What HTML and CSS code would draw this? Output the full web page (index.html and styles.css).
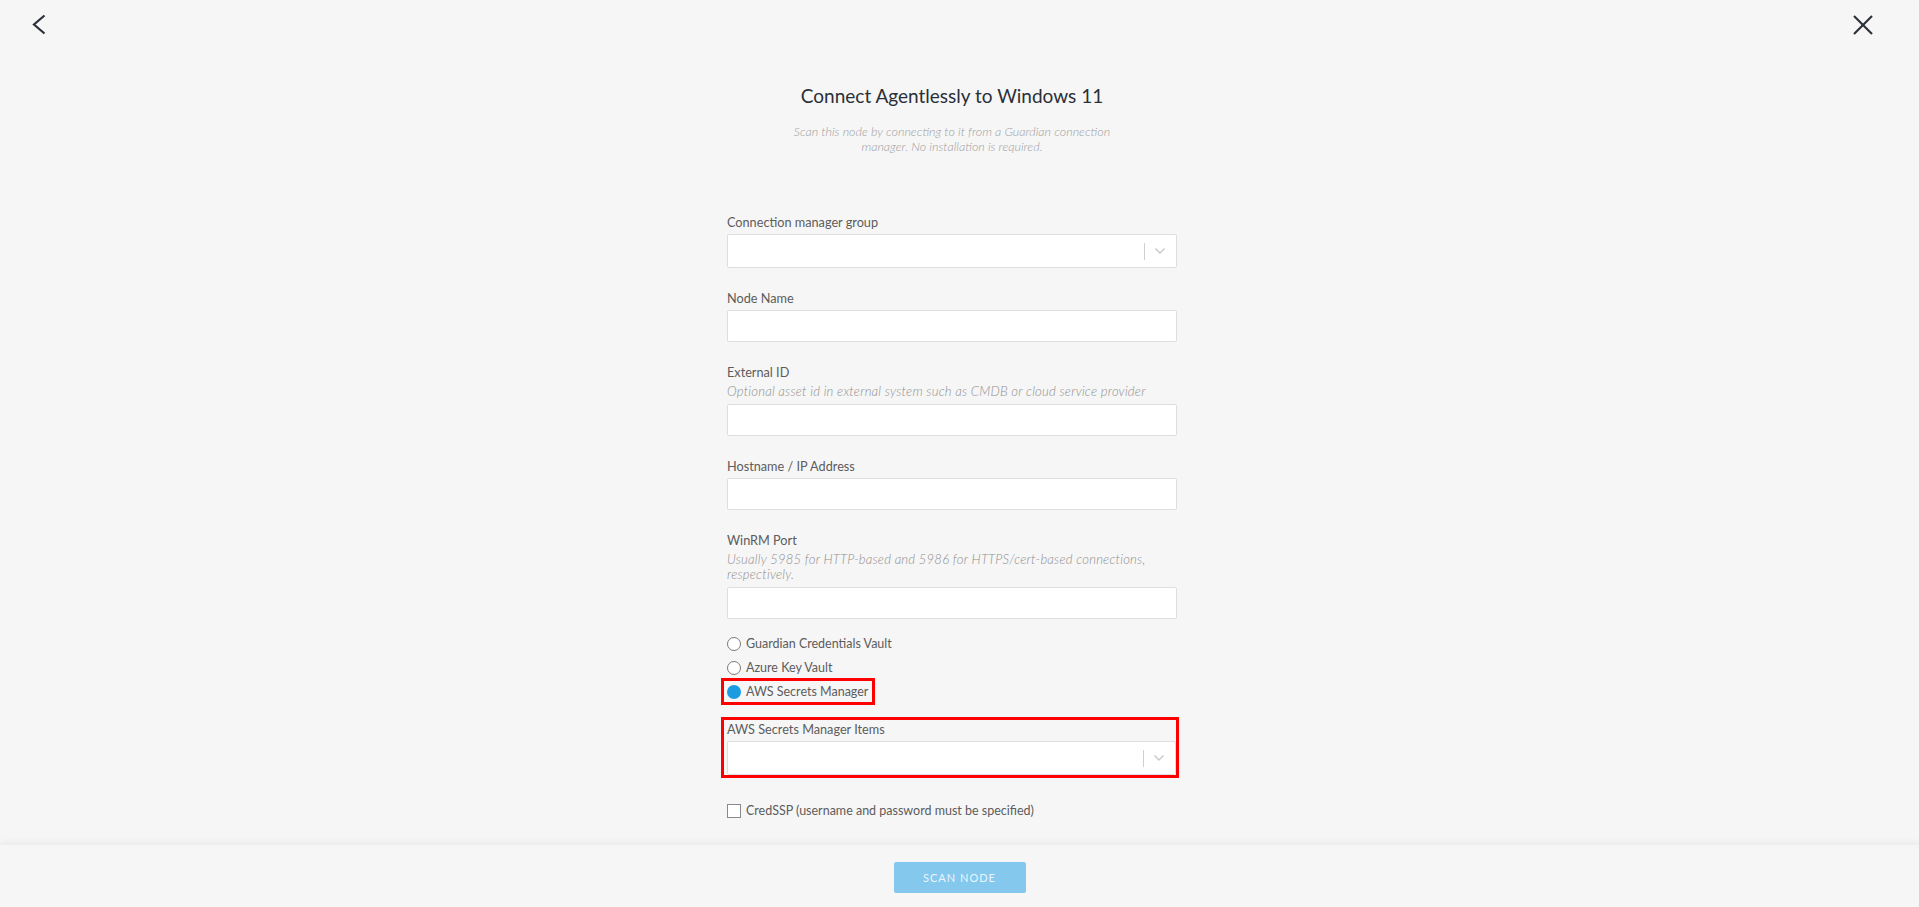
FILE: index.html
```html
<!DOCTYPE html>
<html lang="en">
  <head>
    <meta charset="UTF-8" />
    <meta name="viewport" content="width=device-width, initial-scale=1.0" />
    <title>Connect Agentlessly to Windows 11</title>
    <link rel="stylesheet" href="styles.css">
  </head>
  <body>
    <div class="scroll-area">
      <div class="top-bar">
        <button class="icon-button" title="Back">
          <svg width="14" height="22" viewBox="0 0 14 22">
            <polyline points="12.5,1.5 2,10.5 12.5,19.5" fill="none" stroke="#2b3038" stroke-width="2.2" />
          </svg>
        </button>
        <button class="icon-button" title="Close">
          <svg width="22" height="22" viewBox="0 0 22 22">
            <line x1="2" y1="2" x2="20" y2="20" stroke="#2b3038" stroke-width="2.2" />
            <line x1="20" y1="2" x2="2" y2="20" stroke="#2b3038" stroke-width="2.2" />
          </svg>
        </button>
      </div>

      <h1 class="page-title">Connect Agentlessly to Windows 11</h1>
      <p class="page-subtitle">Scan this node by connecting to it from a Guardian connection manager. No installation is required.</p>

      <form class="node-form">
        <div class="field">
          <label class="field-label">Connection manager group</label>
          <div class="select-box">
            <span class="select-value"></span>
            <span class="select-separator"></span>
            <svg class="select-arrow" width="12" height="8" viewBox="0 0 12 8">
              <polyline points="1.5,1.5 6,6 10.5,1.5" fill="none" stroke="#c8c8c8" stroke-width="1.4" />
            </svg>
          </div>
        </div>

        <div class="field">
          <label class="field-label">Node Name</label>
          <input class="text-input" type="text">
        </div>

        <div class="field">
          <label class="field-label">External ID</label>
          <div class="field-hint">Optional asset id in external system such as CMDB or cloud service provider</div>
          <input class="text-input" type="text">
        </div>

        <div class="field">
          <label class="field-label">Hostname / IP Address</label>
          <input class="text-input" type="text">
        </div>

        <div class="field">
          <label class="field-label">WinRM Port</label>
          <div class="field-hint">Usually 5985 for HTTP-based and 5986 for HTTPS/cert-based connections, respectively.</div>
          <input class="text-input" type="text">
        </div>

        <div class="radio-group">
          <label class="radio-row">
            <span class="radio"></span>
            Guardian Credentials Vault
          </label>
          <label class="radio-row">
            <span class="radio"></span>
            Azure Key Vault
          </label>
          <label class="radio-row marked">
            <span class="radio checked"></span>
            AWS Secrets Manager
          </label>
        </div>

        <div class="field marked-box">
          <label class="field-label">AWS Secrets Manager Items</label>
          <div class="select-box">
            <span class="select-value"></span>
            <span class="select-separator"></span>
            <svg class="select-arrow" width="12" height="8" viewBox="0 0 12 8">
              <polyline points="1.5,1.5 6,6 10.5,1.5" fill="none" stroke="#c8c8c8" stroke-width="1.4" />
            </svg>
          </div>
        </div>

        <label class="check-row">
          <span class="checkbox"></span>
          CredSSP (username and password must be specified)
        </label>
      </form>
    </div>

    <footer class="footer">
      <button class="scan-button" disabled>Scan node</button>
    </footer>
  </body>
</html>
```

FILE: styles.css
```css
html, body {
  margin: 0;
  padding: 0;
  height: 100%;
}

body {
  font-family: Lato, 'Open Sans', sans-serif;
  background-color: #f6f6f6;
  color: #5c5c5c;
  display: flex;
  flex-direction: column;
  overflow: hidden;
}

.scroll-area {
  flex: 1;
  overflow: hidden;
  padding-right: 15px;
}

.top-bar {
  display: flex;
  justify-content: space-between;
  padding: 5px 21px 0 19px;
}

.icon-button {
  width: 40px;
  height: 40px;
  background: none;
  border: none;
  padding: 0;
  display: flex;
  align-items: center;
  justify-content: center;
  cursor: pointer;
}

.page-title {
  margin: 39px 0 0;
  text-align: center;
  font-size: 19px;
  line-height: 24px;
  font-weight: 400;
  color: #2b2f38;
}

.page-subtitle {
  margin: 16px auto 0;
  max-width: 330px;
  text-align: center;
  font-size: 12.5px;
  line-height: 15px;
  font-style: italic;
  font-weight: 300;
  color: #a0a0a0;
}

/* form */
.node-form {
  width: 450px;
  margin: 59px auto 0;
}

.field {
  display: flex;
  flex-direction: column;
  margin-bottom: 21px;
}

.field-label {
  font-size: 12.7px;
  line-height: 18px;
  margin-bottom: 3px;
  color: #5c5c5c;
}

.field-hint {
  font-size: 13.1px;
  line-height: 15px;
  letter-spacing: 0.2px;
  font-style: italic;
  font-weight: 300;
  color: #8f8f8f;
  margin-bottom: 5px;
}

.text-input {
  height: 32px;
  box-sizing: border-box;
  border: 1px solid #dedede;
  border-radius: 2px;
  background-color: white;
  padding: 0 8px;
  font-family: inherit;
  font-size: 13px;
  outline: none;
}

.select-box {
  display: flex;
  align-items: center;
  height: 34px;
  box-sizing: border-box;
  border: 1px solid #dedede;
  border-radius: 2px;
  background-color: white;
}

.select-value {
  flex: 1;
}

.select-separator {
  width: 1px;
  height: 17px;
  background-color: #cfcfcf;
}

.select-arrow {
  margin: 0 10px 0 9px;
}

/* radios */
.radio-group {
  display: flex;
  flex-direction: column;
  align-items: flex-start;
  gap: 3px;
  margin: -7px 0 15px;
}

.radio-row,
.check-row {
  display: inline-flex;
  align-items: center;
  gap: 5px;
  height: 21px;
  font-size: 12.5px;
  color: #5c5c5c;
  cursor: pointer;
}

.radio-row {
  padding: 0 4px 0 3px;
  margin-left: -3px;
}

.radio {
  width: 14px;
  height: 14px;
  box-sizing: border-box;
  border: 1px solid #7a7a7a;
  border-radius: 50%;
  background-color: white;
}

.radio.checked {
  border: none;
  background-color: #1b9be0;
}

.radio-row.marked {
  outline: 3px solid #f00;
}

.marked-box {
  border: 3px solid #f00;
  margin: 0 -2px 22px -6px;
  padding-left: 3px;
}

.checkbox {
  width: 14px;
  height: 14px;
  box-sizing: border-box;
  border: 1px solid #8a8a8a;
  background-color: white;
}

/* bottom bar */
.footer {
  height: 62px;
  flex-shrink: 0;
  display: flex;
  justify-content: center;
  align-items: flex-start;
  background-color: #f6f6f6;
  box-shadow: 0 -3px 6px rgba(0, 0, 0, 0.05);
  position: relative;
}

.scan-button {
  margin-top: 17px;
  width: 132px;
  height: 31px;
  border: none;
  border-radius: 2px;
  background-color: #85c8ee;
  color: rgba(255, 255, 255, 0.85);
  font-family: inherit;
  font-size: 11px;
  letter-spacing: 1px;
  text-transform: uppercase;
}
```
